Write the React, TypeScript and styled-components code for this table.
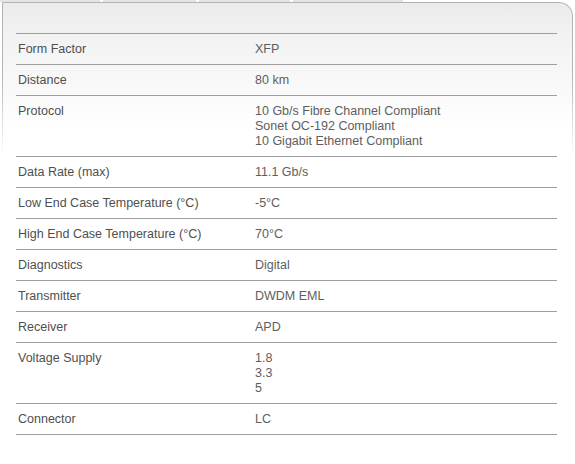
import React from "react";
import styled, { createGlobalStyle } from "styled-components";

const Global = createGlobalStyle`
  html, body { margin: 0; padding: 0; background: #fff; }
  body { font-family: "Liberation Sans", Arial, sans-serif; }
`;

const Page = styled.div`
  width: 575px;
  height: 464px;
  overflow: hidden;
  background: #fff;
`;

const TabStrip = styled.div`
  display: flex;
  height: 2px;
  gap: 3px;
`;

const TabStub = styled.div<{ $w: number }>`
  width: ${(p) => p.$w}px;
  background: #e4e4e4;
`;

const Panel = styled.div`
  position: relative;
  margin-left: 2px;
  width: 571px;
  box-sizing: border-box;
  padding: 31px 16px 0 14px;
  border-top-right-radius: 14px;
  background: linear-gradient(#ebebeb 0px, #f3f3f3 40px, #ffffff 130px);

  &::before {
    content: "";
    position: absolute;
    left: 0;
    top: 0;
    right: 0;
    height: 160px;
    box-sizing: border-box;
    border: 1px solid #b3b3b3;
    border-bottom: none;
    border-top-right-radius: 14px;
    pointer-events: none;
    -webkit-mask-image: linear-gradient(#000 0, #000 70px, transparent 155px);
    mask-image: linear-gradient(#000 0, #000 70px, transparent 155px);
  }
`;

const Table = styled.div`
  position: relative;
  border-top: 1px solid #9f9f9f;
`;

const Row = styled.div`
  display: grid;
  grid-template-columns: 237px 1fr;
  padding: 8px 0 7px 2px;
  border-bottom: 1px solid #9f9f9f;
  font-size: 12.5px;
  line-height: 15px;
`;

const Label = styled.div`
  color: #4f4f4f;
`;

const Value = styled.div`
  color: #5e5e5e;
  display: flex;
  flex-direction: column;
`;

const rows: [string, string[]][] = [
  ["Form Factor", ["XFP"]],
  ["Distance", ["80 km"]],
  [
    "Protocol",
    [
      "10 Gb/s Fibre Channel Compliant",
      "Sonet OC-192 Compliant",
      "10 Gigabit Ethernet Compliant",
    ],
  ],
  ["Data Rate (max)", ["11.1 Gb/s"]],
  ["Low End Case Temperature (°C)", ["-5°C"]],
  ["High End Case Temperature (°C)", ["70°C"]],
  ["Diagnostics", ["Digital"]],
  ["Transmitter", ["DWDM EML"]],
  ["Receiver", ["APD"]],
  ["Voltage Supply", ["1.8", "3.3", "5"]],
  ["Connector", ["LC"]],
];

export default function App() {
  return (
    <Page>
      <Global />
      <TabStrip>
        <TabStub $w={100} />
        <TabStub $w={93} />
        <TabStub $w={91} />
        <TabStub $w={110} />
      </TabStrip>
      <Panel>
        <Table>
          {rows.map(([label, vals]) => (
            <Row key={label}>
              <Label>{label}</Label>
              <Value>
                {vals.map((v) => (
                  <span key={v}>{v}</span>
                ))}
              </Value>
            </Row>
          ))}
        </Table>
      </Panel>
    </Page>
  );
}
